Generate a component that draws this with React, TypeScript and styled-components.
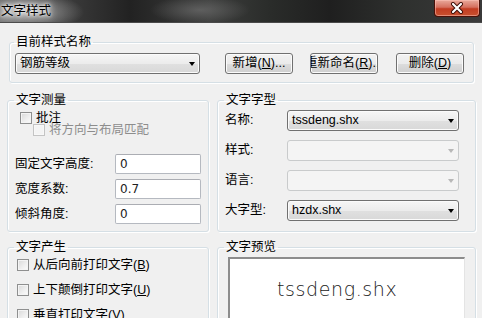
import React from "react";
import styled, { createGlobalStyle } from "styled-components";

const GlobalStyle = createGlobalStyle`
  html, body { margin: 0; padding: 0; background: #f0f0f0; }
  body {
    width: 482px; height: 318px; overflow: hidden;
    font-family: "Liberation Sans", "Noto Sans CJK SC", sans-serif;
    font-size: 12.5px; color: #000;
  }
  * { box-sizing: border-box; }
`;

const Window = styled.div`
  width: 482px; height: 318px; overflow: hidden;
  display: flex; flex-direction: column;
  background: #f0f0f0;
`;

const TitleBar = styled.div`
  height: 23px; flex: none;
  display: flex; align-items: flex-start; justify-content: space-between;
  background:
    radial-gradient(ellipse 60px 20px at 24px 12px, rgba(190,190,190,0.85), rgba(120,120,120,0) 100%),
    radial-gradient(ellipse 50px 14px at 200px 10px, rgba(110,110,110,0.7), rgba(110,110,110,0) 100%),
    linear-gradient(to right, #5a5a5a 0px, #3a3a3a 70px, #222 130px, #3c3d3c 210px, #2a2c2a 270px, #1f1f1f 330px, #2e302e 400px, #3a3a3a 482px);
  border-bottom: 1px solid #4a4a4a;
`;

const Title = styled.div`
  padding: 4px 0 0 1px;
  line-height: 15px;
  font-size: 12.5px;
  color: #000;
  text-shadow: 0 0 6px #fff, 0 0 8px rgba(255,255,255,0.9), 0 0 3px #fff;
`;

const CloseButton = styled.div`
  width: 46px; height: 17px; margin-right: 2px;
  display: flex; align-items: center; justify-content: center;
  border: 1px solid #4a1008; border-top: none;
  border-radius: 0 0 4px 4px;
  background: linear-gradient(#e9a99b 0%, #d5705f 45%, #c23c22 55%, #c8512f 100%);
  box-shadow: inset 0 0 0 1px rgba(255,200,190,0.5);
`;

const Content = styled.div`
  padding: 0 5px 0 7px;
  display: flex; flex-direction: column;
`;

const Group = styled.fieldset<{ $pl?: number; $pr?: number; $pt?: number; $pb?: number }>`
  margin: 0; min-width: 0;
  border: 1px solid #d5dfe5;
  border-radius: 3px;
  box-shadow: inset 1px 1px 0 #fff, 1px 1px 0 #fff;
  padding: ${(p) => p.$pt ?? 0}px ${(p) => p.$pr ?? 0}px ${(p) => p.$pb ?? 0}px ${(p) => p.$pl ?? 6}px;
`;

const TopGroup = styled(Group)`
  margin: 12px 3px 0 2px;
`;

const Legend = styled.legend`
  padding: 0 2px;
  line-height: 15px;
  font-size: 12.5px;
`;

const TopRow = styled.div`
  display: flex; align-items: center;
  padding-left: 1px;
`;

const Combo = styled.div<{ $w: number; $disabled?: boolean }>`
  width: ${(p) => p.$w}px; height: 21px; flex: none;
  display: flex; align-items: center; justify-content: space-between;
  padding: 0 4px 0 4px;
  border: 1px solid ${(p) => (p.$disabled ? "#c9cbcc" : "#707070")};
  border-radius: 3px;
  background: ${(p) =>
    p.$disabled
      ? "#f4f4f4"
      : "linear-gradient(#f6f6f6 0%, #ececec 50%, #e0e0e0 51%, #d8d8d8 100%)"};
  box-shadow: ${(p) => (p.$disabled ? "none" : "inset 0 0 0 1px #fbfbfb")};
  font-size: 12.5px;
`;

const ComboText = styled.span`
  line-height: 15px;
  white-space: nowrap;
`;

const Arrow = styled.span<{ $disabled?: boolean }>`
  width: 0; height: 0;
  border-left: 3.5px solid transparent;
  border-right: 3.5px solid transparent;
  border-top: 4px solid ${(p) => (p.$disabled ? "#b8b8b8" : "#000")};
`;

const Button = styled.div<{ $ml: number }>`
  width: 68px; height: 21px; flex: none;
  margin-left: ${(p) => p.$ml}px;
  display: flex; align-items: center; justify-content: center;
  overflow: hidden; white-space: nowrap;
  border: 1px solid #707070; border-radius: 3px;
  background: linear-gradient(#f2f2f2 0%, #ebebeb 50%, #dddddd 51%, #cfcfcf 100%);
  box-shadow: inset 0 0 0 1px #fbfbfb;
  line-height: 15px;
`;

const Caption = styled.span`
  white-space: nowrap;
  flex: none;
  line-height: 15px;
`;

const Key = styled.span`
  text-decoration: underline;
  text-underline-offset: 1px;
`;

const Row = styled.div<{ $mt: number }>`
  display: grid;
  grid-template-columns: 202px 259px;
  column-gap: 8px;
  margin-top: ${(p) => p.$mt}px;
`;

const CheckRow = styled.div<{ $indent: number; $h: number; $disabled?: boolean }>`
  display: flex; align-items: center; gap: 4px;
  height: ${(p) => p.$h}px;
  margin-left: ${(p) => p.$indent}px;
  color: ${(p) => (p.$disabled ? "#8d8d8d" : "#000")};
  line-height: 15px;
  white-space: nowrap;
`;

const Box = styled.span<{ $disabled?: boolean }>`
  width: 12px; height: 12px; flex: none;
  border: 1px solid ${(p) => (p.$disabled ? "#c4c4c4" : "#8e8f8f")};
  background: ${(p) =>
    p.$disabled ? "#f4f4f4" : "linear-gradient(135deg, #d8d8d8 0%, #f0f0f0 60%, #fcfcfc 100%)"};
  box-shadow: inset 0 0 0 1px ${(p) => (p.$disabled ? "#f8f8f8" : "#f4f4f4")};
`;

const FieldList = styled.div<{ $gap: number; $mt: number }>`
  display: flex; flex-direction: column;
  gap: ${(p) => p.$gap}px;
  margin-top: ${(p) => p.$mt}px;
`;

const FieldRow = styled.div<{ $label: number }>`
  display: grid;
  grid-template-columns: ${(p) => p.$label}px auto;
  align-items: center;
  margin-left: 1px;
`;

const Label = styled.span`
  line-height: 15px;
  white-space: nowrap;
`;

const TextBox = styled.div`
  width: 86px; height: 20px;
  display: flex; align-items: center;
  padding-left: 4px;
  background: #fff;
  border: 1px solid #b5b9c0;
  border-top-color: #abadb3;
  border-radius: 2px;
  font-family: "DejaVu Sans", sans-serif;
  font-size: 12px;
  color: #222;
`;

const Preview = styled.div`
  height: 70px;
  margin: 2px 0 0 4px;
  background: #fff;
  border-top: 2px solid #8c8c8c;
  border-left: 2px solid #8c8c8c;
  border-right: 1px solid #e4e4e4;
  padding: 18px 0 0 47px;
`;

const PreviewText = styled.span`
  font-family: "DejaVu Sans", sans-serif;
  font-weight: 200;
  font-size: 19px;
  letter-spacing: 0.6px;
  line-height: 24px;
  color: #1a1a1a;
`;

const CloseIcon = () => (
  <svg width="14" height="12" viewBox="0 0 14 12">
    <path d="M3 2 L11 10 M11 2 L3 10" stroke="#3a0a04" strokeWidth="4" strokeLinecap="round" />
    <path d="M3 2 L11 10 M11 2 L3 10" stroke="#fff" strokeWidth="2.2" strokeLinecap="round" />
  </svg>
);

export default function App() {
  return (
    <>
      <GlobalStyle />
      <Window>
        <TitleBar>
          <Title>文字样式</Title>
          <CloseButton>
            <CloseIcon />
          </CloseButton>
        </TitleBar>
        <Content>
          <TopGroup $pl={4} $pt={3} $pb={8}>
            <Legend>目前样式名称</Legend>
            <TopRow>
              <Combo $w={185}>
                <ComboText>钢筋等级</ComboText>
                <Arrow />
              </Combo>
              <Button $ml={25}>
                <Caption>新增(<Key>N</Key>)...</Caption>
              </Button>
              <Button $ml={17}>
                <Caption>重新命名(<Key>R</Key>)...</Caption>
              </Button>
              <Button $ml={18}>
                <Caption>删除(<Key>D</Key>)</Caption>
              </Button>
            </TopRow>
          </TopGroup>

          <Row $mt={10}>
            <Group $pl={6} $pt={4} $pb={6}>
              <Legend>文字测量</Legend>
              <CheckRow $indent={6} $h={12}>
                <Box />
                <Caption>批注</Caption>
              </CheckRow>
              <CheckRow $indent={19} $h={12} $disabled>
                <Box $disabled />
                <Caption>将方向与布局匹配</Caption>
              </CheckRow>
              <FieldList $gap={5} $mt={18}>
                <FieldRow $label={100}>
                  <Label>固定文字高度:</Label>
                  <TextBox>0</TextBox>
                </FieldRow>
                <FieldRow $label={100}>
                  <Label>宽度系数:</Label>
                  <TextBox>0.7</TextBox>
                </FieldRow>
                <FieldRow $label={100}>
                  <Label>倾斜角度:</Label>
                  <TextBox>0</TextBox>
                </FieldRow>
              </FieldList>
            </Group>

            <Group $pl={6} $pr={15} $pt={2} $pb={10}>
              <Legend>文字字型</Legend>
              <FieldList $gap={9} $mt={0}>
                <FieldRow $label={62}>
                  <Label>名称:</Label>
                  <Combo $w={172}>
                    <ComboText>tssdeng.shx</ComboText>
                    <Arrow />
                  </Combo>
                </FieldRow>
                <FieldRow $label={62}>
                  <Label>样式:</Label>
                  <Combo $w={172} $disabled>
                    <ComboText />
                    <Arrow $disabled />
                  </Combo>
                </FieldRow>
                <FieldRow $label={62}>
                  <Label>语言:</Label>
                  <Combo $w={172} $disabled>
                    <ComboText />
                    <Arrow $disabled />
                  </Combo>
                </FieldRow>
                <FieldRow $label={62}>
                  <Label>大字型:</Label>
                  <Combo $w={172}>
                    <ComboText>hzdx.shx</ComboText>
                    <Arrow />
                  </Combo>
                </FieldRow>
              </FieldList>
            </Group>
          </Row>

          <Row $mt={8}>
            <Group $pl={6} $pt={4}>
              <Legend>文字产生</Legend>
              <FieldList $gap={13} $mt={0}>
                <CheckRow $indent={3} $h={12}>
                  <Box />
                  <Caption>从后向前打印文字(<Key>B</Key>)</Caption>
                </CheckRow>
                <CheckRow $indent={3} $h={12}>
                  <Box />
                  <Caption>上下颠倒打印文字(<Key>U</Key>)</Caption>
                </CheckRow>
                <CheckRow $indent={3} $h={12}>
                  <Box />
                  <Caption>垂直打印文字(<Key>V</Key>)</Caption>
                </CheckRow>
              </FieldList>
            </Group>
            <Group $pl={6} $pr={10} $pt={0}>
              <Legend>文字预览</Legend>
              <Preview>
                <PreviewText>tssdeng.shx</PreviewText>
              </Preview>
            </Group>
          </Row>
        </Content>
      </Window>
    </>
  );
}
